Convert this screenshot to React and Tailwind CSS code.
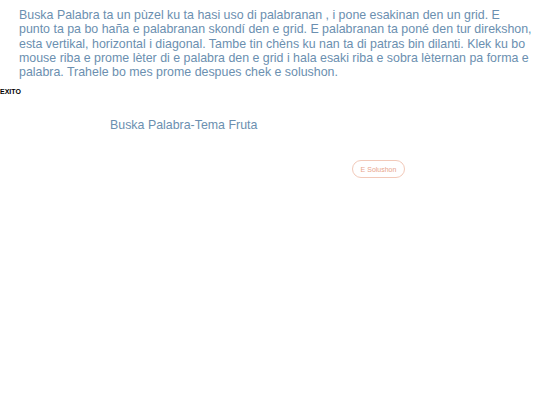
export default function App() {
  return (
    <div className="min-h-[405px] bg-white" style={{ fontFamily: '"Liberation Sans", Arial, sans-serif' }}>
      <p className="pl-[19px] pr-[7px] pt-[8px] text-[12.4px] leading-[14.3px] text-[#6b8fb0]">
        Buska Palabra ta un pùzel ku ta hasi uso di palabranan , i pone esakinan den un grid. E punto ta pa bo haña e palabranan skondí den e grid. E palabranan ta poné den tur direkshon, esta vertikal, horizontal i diagonal. Tambe tin chèns ku nan ta di patras bin dilanti. Klek ku bo mouse riba e prome lèter di e palabra den e grid i hala esaki riba e sobra lèternan pa forma e palabra. Trahele bo mes prome despues chek e solushon.
      </p>
      <div className="mt-[9px] text-[7px] font-bold leading-[8px] text-black">EXITO</div>
      <div className="ml-[110px] mt-[21px] text-[12.4px] leading-[16px] text-[#6b8fb0]">Buska Palabra-Tema Fruta</div>
      <div className="mt-[27px] flex pl-[352px]">
        <button className="h-[18px] w-[53px] rounded-full border border-[#f2c9b9] text-[7px] leading-none text-[#e8a58c]">
          E Solushon
        </button>
      </div>
    </div>
  );
}
